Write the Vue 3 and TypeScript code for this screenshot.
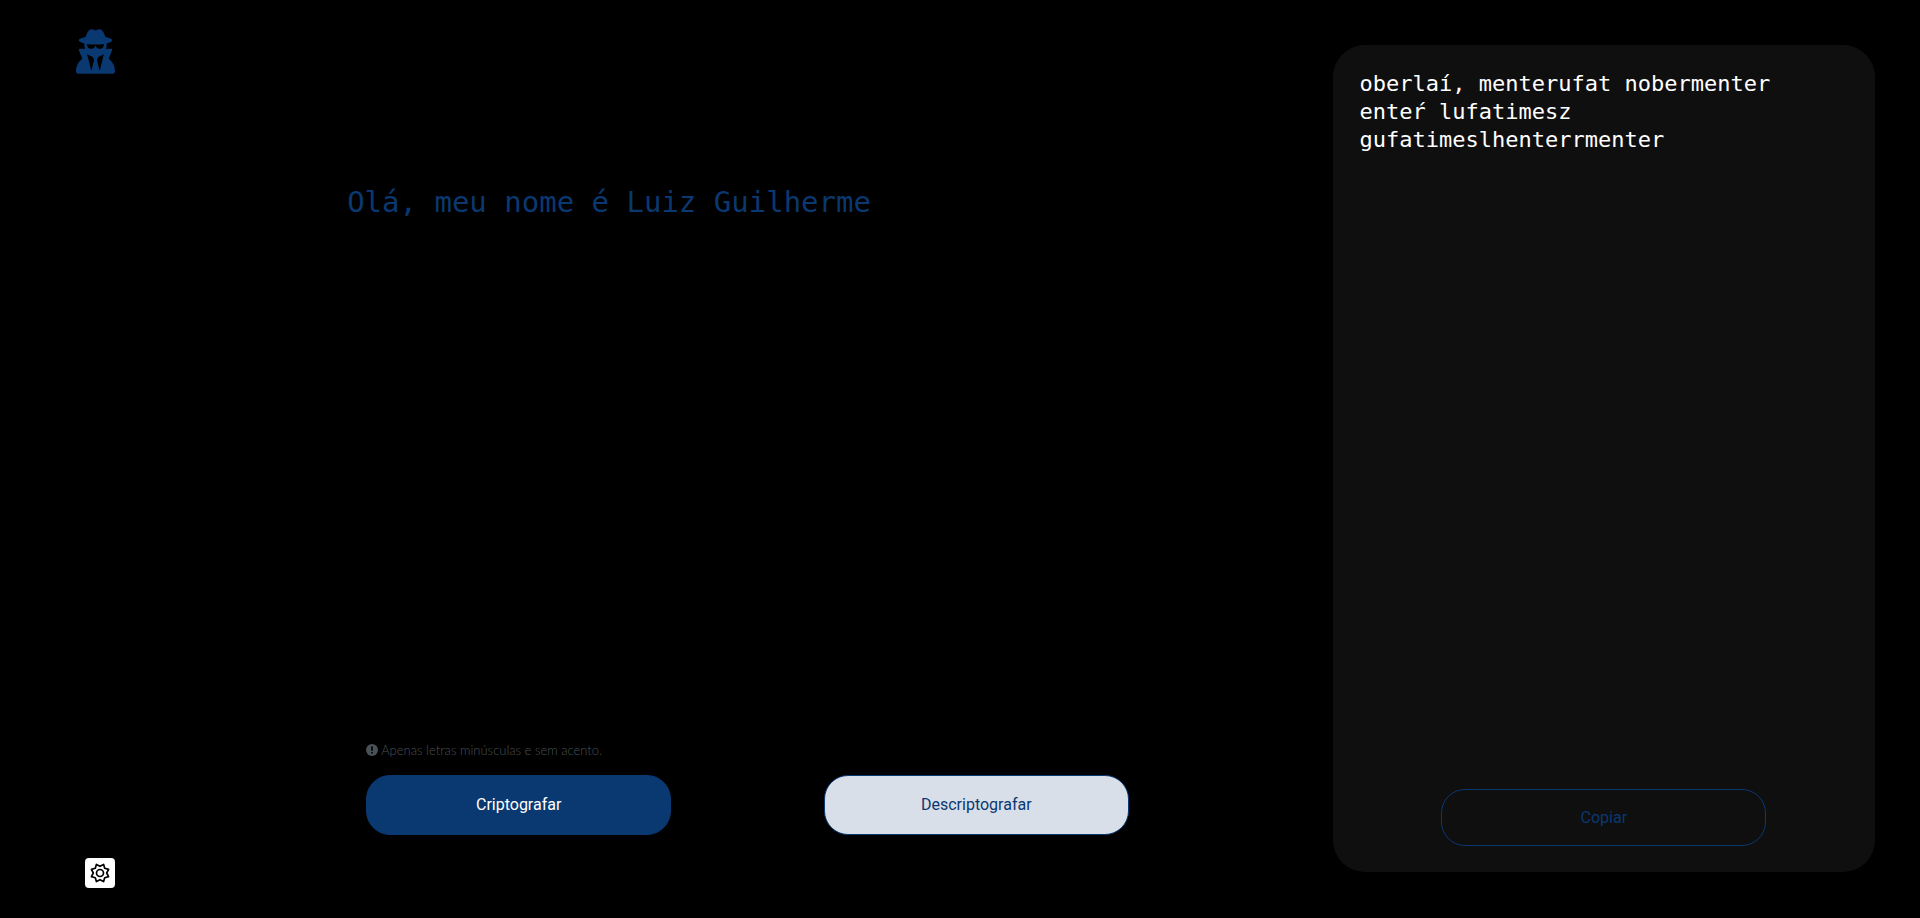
<script setup lang="ts">
import { ref } from 'vue'

const message = ref('Olá, meu nome é Luiz Guilherme')
const result = ref('oberlaí, menterufat nobermenter enteŕ lufatimesz gufatimeslhenterrmenter')

const rules: [string, string][] = [
  ['e', 'enter'],
  ['i', 'imes'],
  ['a', 'ai'],
  ['o', 'ober'],
  ['u', 'ufat'],
]

function encrypt() {
  const map = new Map(rules)
  result.value = message.value.replace(/[eiaou]/g, (c) => map.get(c) ?? c)
}

function decrypt() {
  result.value = rules.reduce((text, [plain, code]) => text.split(code).join(plain), message.value)
}

function copy() {
  navigator.clipboard?.writeText(result.value)
}
</script>

<template>
  <div class="page">
    <header class="rail">
      <svg class="logo" viewBox="0 0 448 512" role="img" aria-label="Espião">
        <path
          d="M224 16c-6.700 0-10.800-2.800-15.500-6.100C201.900 5.400 194 0 176 0c-30.500 0-52 43.700-66 89.400C62.700 98.100 32 112.200 32 128c0 14.300 25 27.100 64.600 35.900c-.4 4-.6 8-.6 12.100c0 17 3.300 33.200 9.300 48H45.400C38 224 32 230 32 237.400c0 1.700 .3 3.400 1 5l38.800 96.900C28.200 371.800 0 423.800 0 482.300C0 498.700 13.300 512 29.700 512H418.300c16.400 0 29.700-13.300 29.700-29.700c0-58.500-28.200-110.400-71.700-143L415 242.400c.6-1.600 1-3.300 1-5c0-7.400-6-13.400-13.400-13.400H342.700c6-14.800 9.300-31 9.300-48c0-4.100-.2-8.100-.6-12.100C391 155.100 416 142.300 416 128c0-15.800-30.700-29.900-78-38.600C324 43.700 302.500 0 272 0c-18 0-25.900 5.400-32.500 9.900c-4.800 3.300-8.800 6.100-15.500 6.100zm56 208H267.600c-16.500 0-31.100-10.600-36.300-26.200c-2.300-7-12.200-7-14.500 0c-5.200 15.600-19.900 26.200-36.300 26.200H168c-22.100 0-40-17.900-40-40V169.600c28.200 4.100 61 6.400 96 6.400s67.800-2.300 96-6.400V184c0 22.100-17.900 40-40 40zm-88 96l16 32L176 480 128 288l64 32zm128-32L272 480 240 352l16-32 64-32z"
        />
      </svg>
      <button class="settings" type="button" aria-label="Configurações">
        <svg viewBox="-10 -10 20 20" aria-hidden="true">
          <path
            d="M3.600-8.600 4.700-4.700 8.600-3.600 6.700 0 8.600 3.600 4.700 4.700 3.600 8.600 0 6.700-3.600 8.600-4.700 4.700-8.600 3.600-6.700 0-8.600-3.600-4.700-4.700-3.600-8.600 0-6.700Z"
          />
          <circle r="3.500" />
        </svg>
      </button>
    </header>

    <main class="editor">
      <textarea v-model="message" class="message" aria-label="Digite seu texto" spellcheck="false"></textarea>
      <div class="controls">
        <p class="note">
          <svg viewBox="0 0 12 12" aria-hidden="true">
            <circle cx="6" cy="6" r="6" fill="#495057" />
            <path d="M5 2.500h2L6.700 7H5.300ZM5.200 8h1.600v1.500H5.200Z" fill="#000" />
          </svg>
          Apenas letras minúsculas e sem acento.
        </p>
        <div class="actions">
          <button class="button primary" type="button" @click="encrypt">Criptografar</button>
          <button class="button light" type="button" @click="decrypt">Descriptografar</button>
        </div>
      </div>
    </main>

    <aside class="panel">
      <textarea v-model="result" class="result" aria-label="Resultado" readonly spellcheck="false"></textarea>
      <button class="button outline" type="button" @click="copy">Copiar</button>
    </aside>
  </div>
</template>

<style>
body {
  margin: 0;
  background: #000;
}
</style>

<style scoped>
.page {
  box-sizing: border-box;
  min-height: 100vh;
  display: grid;
  grid-template-columns: 10vw minmax(0, 1fr) 28.25vw;
  padding-right: 45px;
  background: #000;
  font-family: Roboto, "Liberation Sans", sans-serif;
}
.rail {
  display: flex;
  flex-direction: column;
  align-items: flex-start;
  justify-content: space-between;
  padding: 29px 0 30px 76px;
}
.logo {
  width: 39px;
  height: 45px;
  fill: #0a3871;
}
.settings {
  display: grid;
  place-items: center;
  width: 30px;
  height: 30px;
  margin-left: 9px;
  padding: 0;
  border: 0;
  border-radius: 4px;
  background: #fff;
  cursor: pointer;
}
.settings svg {
  width: 20px;
  height: 20px;
  fill: none;
  stroke: #000;
  stroke-width: 1.7;
  stroke-linejoin: round;
}
.editor {
  display: flex;
  flex-direction: column;
  width: 70.2%;
  margin: 0 16.2% 0 auto;
  padding: 184px 0 83px;
}
textarea {
  display: block;
  box-sizing: border-box;
  width: 100%;
  flex: 1;
  margin: 0;
  padding: 0;
  border: 0;
  outline: 0;
  resize: none;
  background: transparent;
  font-family: "DejaVu Sans Mono", "Liberation Mono", monospace;
}
.message {
  color: #0a3871;
  font-size: 29px;
  line-height: 36px;
}
.controls {
  padding: 0 19px;
}
.note {
  display: flex;
  align-items: center;
  gap: 3px;
  margin: 0 0 17px;
  color: #495057;
  font: 300 13px/16px Lato, sans-serif;
}
.note svg {
  width: 12px;
  height: 12px;
}
.actions {
  display: flex;
  justify-content: space-between;
}
.button {
  box-sizing: border-box;
  padding: 0;
  border: 1px solid #0a3871;
  border-radius: 24px;
  font: 400 16px/20px Roboto, sans-serif;
  cursor: pointer;
}
.actions .button {
  width: 40%;
  height: 60px;
}
.primary {
  background: #0a3871;
  color: #fff;
}
.light {
  background: #d8dfe8;
  color: #0a3871;
}
.panel {
  box-sizing: border-box;
  display: flex;
  flex-direction: column;
  align-items: center;
  margin: 45px 0 46px;
  padding: 25px 27px 26px;
  border-radius: 32px;
  background: #0f0f0f;
}
.result {
  padding-right: 16px;
  color: #fff;
  font-size: 22px;
  line-height: 28px;
}
.outline {
  width: 66.5%;
  height: 57px;
  background: transparent;
  color: #0a3871;
}
</style>
